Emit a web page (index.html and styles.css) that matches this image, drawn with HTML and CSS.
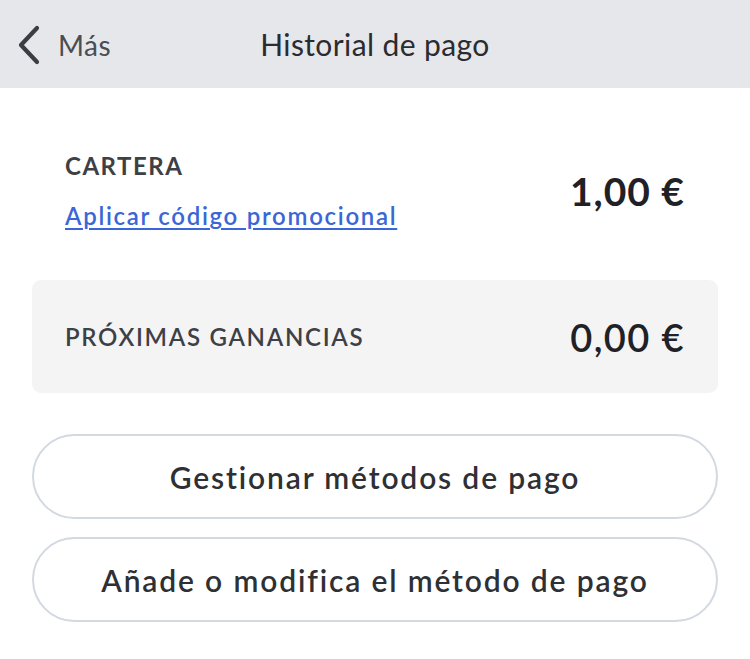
FILE: index.html
```html
<!DOCTYPE html>
<html lang="es">
<head>
<meta charset="utf-8">
<link rel="stylesheet" href="styles.css">
</head>
<body>
<header class="nav">
  <div class="back">
    <svg class="chev" width="28" height="40" viewBox="0 0 28 40"><path d="M22 3 L6 20 L22 37" fill="none" stroke="#3a3d42" stroke-width="4.2" stroke-linecap="round" stroke-linejoin="round"/></svg>
    <span class="back-label">Más</span>
  </div>
  <div class="title">Historial de pago</div>
</header>
<main class="content">
  <section class="wallet">
    <div class="wallet-left">
      <div class="label wallet-label">CARTERA</div>
      <a class="promo" href="#">Aplicar código promocional</a>
    </div>
    <div class="amount">1,00 €</div>
  </section>
  <section class="earnings">
    <div class="label">PRÓXIMAS GANANCIAS</div>
    <div class="amount">0,00 €</div>
  </section>
  <div class="buttons">
    <button class="pill">Gestionar métodos de pago</button>
    <button class="pill">Añade o modifica el método de pago</button>
  </div>
</main>
</body>
</html>
```
FILE: styles.css
```css
* { box-sizing: border-box; }
html, body { margin: 0; padding: 0; background: #fff; }
body { font-family: Lato, "Open Sans", sans-serif; color: #303236; width: 750px; height: 659px; overflow: hidden; }

.nav { position: relative; height: 88px; background: #e6e7eb; display: flex; align-items: center; }
.back { display: flex; align-items: center; padding-left: 15px; padding-top: 2px; }
.chev { display: block; margin-right: 15px; }
.back-label { font-size: 28px; color: #4a4d52; line-height: 34px; letter-spacing: 0.5px; }
.title { position: absolute; left: 0; right: 0; top: 0; height: 88px; display: flex; align-items: center; justify-content: center; font-size: 30px; letter-spacing: 0.4px; color: #2a2c30; pointer-events: none; }

.content { padding: 0 32px; }
.wallet { display: flex; align-items: center; justify-content: space-between; height: 192px; padding: 14px 33px 0 33px; }
.wallet-left { display: flex; flex-direction: column; align-items: flex-start; }
.label { font-size: 24px; line-height: 28px; font-weight: 600; letter-spacing: 1.6px; color: #3d4045; }
.wallet-label { font-weight: 700; letter-spacing: 1.5px; }
.promo { margin-top: 22px; font-size: 24px; line-height: 28px; font-weight: 600; color: #3a66d6; text-decoration: underline; text-underline-offset: 3px; text-decoration-thickness: 2px; letter-spacing: 1.7px; }
.amount { font-size: 39px; line-height: 44px; font-weight: 700; color: #1f2126; letter-spacing: 1px; }

.earnings { height: 113px; background: #f4f4f4; border-radius: 9px; display: flex; align-items: center; justify-content: space-between; padding: 0 33px 0 33px; }
.earnings .label { font-weight: 600; letter-spacing: 1.7px; }
.earnings .amount { font-size: 38px; font-weight: 600; letter-spacing: 1.4px; }

.buttons { display: flex; flex-direction: column; gap: 18px; margin-top: 41px; }
.pill { height: 85px; width: 100%; border: 2px solid #d3d9e0; border-radius: 43px; background: #fff; font-family: Lato, "Open Sans", sans-serif; font-size: 30px; font-weight: 600; color: #2e3034; letter-spacing: 1.85px; padding: 0; }
```
